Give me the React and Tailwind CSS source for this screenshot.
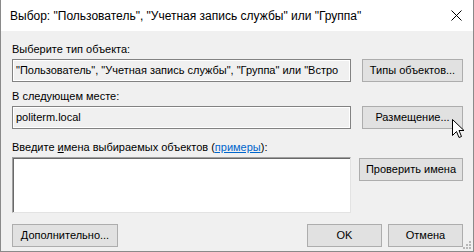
export default function App() {
    const btn = "h-[23px] bg-[#e1e1e1] border border-[#adadad] text-[11px] text-black flex items-center justify-center";
    const sunkenRO = "h-[23px] w-[339px] bg-[#f0f0f0] border border-[#828282] shadow-[inset_0_0_0_1px_#ffffff] flex items-center px-[3px] text-[11px] text-black overflow-hidden whitespace-nowrap";

    return (
        <div className="w-[474px] h-[252px] relative flex flex-col bg-[#f0f0f0] border-x border-b border-[#8a8a8a] font-['Liberation_Sans',sans-serif] select-none">
            <div className="h-[31px] bg-white flex items-center justify-between pl-[9px] pr-[10px]">
                <span className="text-[12px] text-black">Выбор: "Пользователь", "Учетная запись службы" или "Группа"</span>
                <svg width="11" height="11" viewBox="0 0 11 11" className="mr-[1px]">
                    <path d="M0.5 0.5 L10.5 10.5 M10.5 0.5 L0.5 10.5" stroke="#000" strokeWidth="1" />
                </svg>
            </div>

            <div className="flex-1 flex flex-col pl-[11px] pr-[10px]">
                <div className="mt-[12px] text-[11px] leading-[13px] text-black">Выберите тип объекта:</div>
                <div className="mt-[3px] flex items-center justify-between">
                    <div className={sunkenRO}>"Пользователь", "Учетная запись службы", "Группа" или "Встро</div>
                    <button className={btn + " w-[101px]"}>Типы объектов...</button>
                </div>

                <div className="mt-[8px] text-[11px] leading-[13px] text-black">В следующем месте:</div>
                <div className="mt-[3px] flex items-center justify-between">
                    <div className={sunkenRO}>politerm.local</div>
                    <button className={btn + " w-[101px]"}>Размещение...</button>
                </div>

                <div className="mt-[12px] text-[11px] leading-[13px] text-black">
                    Введите <span className="underline">и</span>мена выбираемых объектов (<span className="text-[#0066cc] underline">примеры</span>):
                </div>
                <div className="mt-[3px] flex items-start justify-between">
                    <div className="h-[56px] w-[339px] bg-white border-t border-l border-[#a0a0a0] border-b border-r border-b-[#e3e3e3] border-r-[#e3e3e3] shadow-[inset_1px_1px_0_0_#696969]"></div>
                    <button className={btn + " w-[104px] mt-[1px]"}>Проверить имена</button>
                </div>

                <div className="mt-[11px] flex items-center">
                    <button className={btn + " w-[106px]"}>Дополнительно...</button>
                    <div className="flex-1" />
                    <button className={btn + " w-[75px]"}>OK</button>
                    <button className={btn + " w-[75px] ml-[6px]"}>Отмена</button>
                </div>
            </div>

            <svg width="8" height="8" viewBox="0 0 8 8" className="absolute right-[2px] bottom-[2px]">
                <rect x="6" y="0" width="2" height="2" fill="#b8b8b8" />
                <rect x="3" y="3" width="2" height="2" fill="#b8b8b8" />
                <rect x="6" y="3" width="2" height="2" fill="#b8b8b8" />
                <rect x="0" y="6" width="2" height="2" fill="#b8b8b8" />
                <rect x="3" y="6" width="2" height="2" fill="#b8b8b8" />
                <rect x="6" y="6" width="2" height="2" fill="#b8b8b8" />
            </svg>

            <svg width="13" height="21" viewBox="0 0 13 21" className="absolute left-[451px] top-[119px]">
                <path d="M0.5 0.5 L0.5 16.5 L4.5 12.5 L7 18.5 L9.5 17.5 L7 11.5 L12 11.5 Z" fill="#fff" stroke="#000" strokeWidth="1" strokeLinejoin="miter" />
            </svg>
        </div>
    );
}
